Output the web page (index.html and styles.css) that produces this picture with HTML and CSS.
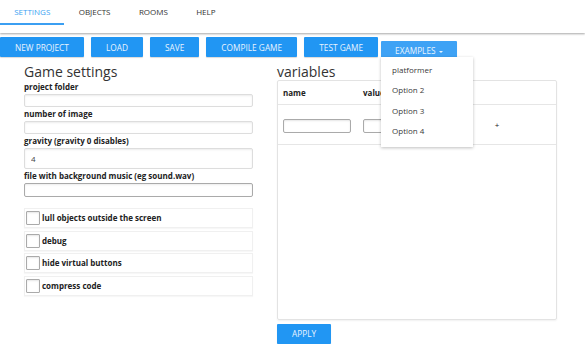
FILE: index.html
```html
<!DOCTYPE html>
<html lang="en">
<head>
    <meta charset="UTF-8">
    <meta name="viewport" content="width=device-width, initial-scale=1.0">
    <title>Game maker</title>
    <link rel="stylesheet" href="styles.css">
</head>
<body>
    <nav class="tabs">
        <a class="tab active">SETTINGS</a>
        <a class="tab">OBJECTS</a>
        <a class="tab">ROOMS</a>
        <a class="tab">HELP</a>
    </nav>

    <div class="toolbar">
        <button class="btn">NEW PROJECT</button>
        <button class="btn">LOAD</button>
        <button class="btn">SAVE</button>
        <button class="btn">COMPILE GAME</button>
        <button class="btn">TEST GAME</button>
        <div class="dropdown">
            <button class="btn open">EXAMPLES <span class="caret"></span></button>
            <ul class="menu">
                <li>platformer</li>
                <li>Option 2</li>
                <li>Option 3</li>
                <li>Option 4</li>
            </ul>
        </div>
    </div>

    <div class="content">
        <section class="settings">
            <h2>Game settings</h2>
            <label for="folder">project folder</label>
            <input type="text" id="folder" class="field">
            <label for="images">number of image</label>
            <input type="text" id="images" class="field">
            <label for="gravity">gravity (gravity 0 disables)</label>
            <input type="text" id="gravity" class="field tall" value="4">
            <label for="music">file with background music (eg sound.wav)</label>
            <input type="text" id="music" class="field dark">

            <div class="checks">
                <label class="check"><span class="box"></span>lull objects outside the screen</label>
                <label class="check"><span class="box"></span>debug</label>
                <label class="check"><span class="box"></span>hide virtual buttons</label>
                <label class="check"><span class="box"></span>compress code</label>
            </div>
        </section>

        <section class="vars">
            <h2>variables</h2>
            <div class="panel">
                <table>
                    <tr>
                        <th class="col-name">name</th>
                        <th class="col-value">value</th>
                        <th></th>
                    </tr>
                    <tr class="entry">
                        <td><input type="text" class="cell-input"></td>
                        <td><input type="text" class="cell-input"></td>
                        <td class="add">+</td>
                    </tr>
                </table>
            </div>
            <button class="btn apply">APPLY</button>
        </section>
    </div>
</body>
</html>
```

FILE: styles.css
```css
body {
    margin: 0;
    font-family: "Open Sans", Arial, sans-serif;
    background-color: #ffffff;
    color: #333333;
}

.tabs {
    display: flex;
    height: 33px;
    box-shadow: 0 1px 2px rgba(0, 0, 0, 0.35);
}

.tab {
    padding: 0 14.2px;
    height: 23px;
    line-height: 23px;
    font-size: 8px;
    color: #333333;
    border-bottom: 2px solid transparent;
}

.tab.active {
    color: #3b9ff2;
    border-bottom-color: #3b9ff2;
}

.toolbar {
    display: flex;
    margin-top: 4px;
    height: 20px;
}

.btn {
    height: 20px;
    padding: 0 15px;
    margin-right: 7px;
    border: none;
    border-radius: 1px;
    background-color: #2196f3;
    color: #e8f3fe;
    font-family: "Open Sans", Arial, sans-serif;
    font-size: 8.3px;
    cursor: pointer;
    box-shadow: 0 1px 1px rgba(0, 0, 0, 0.15);
}

.btn.open {
    background-color: #3ea2f5;
    margin-right: 0;
    padding: 0 14px;
}

.caret {
    display: inline-block;
    width: 0;
    height: 0;
    margin-left: 1px;
    vertical-align: 1px;
    border-left: 2px solid transparent;
    border-right: 2px solid transparent;
    border-top: 2px solid #e8f3fe;
}

.dropdown {
    position: relative;
    margin-left: -4px;
}

.menu {
    position: absolute;
    top: 100%;
    left: 0;
    width: 92px;
    margin: 0;
    padding: 3px 0 6px;
    list-style: none;
    background-color: #ffffff;
    box-shadow: 0 1px 3px rgba(0, 0, 0, 0.25);
    z-index: 5;
}

.menu li {
    height: 20.3px;
    line-height: 20.3px;
    padding-left: 11px;
    font-size: 8px;
    color: #3a3a3a;
}

.content {
    display: grid;
    grid-template-columns: 229px 280px;
    column-gap: 24px;
    padding-left: 24px;
}

h2 {
    margin: 7px 0 0;
    font-size: 14px;
    line-height: 16px;
    font-weight: 400;
    color: #333333;
}

.settings label {
    display: block;
    font-size: 8px;
    font-weight: 700;
    line-height: 14px;
    color: #222222;
}

.field {
    display: block;
    box-sizing: border-box;
    width: 100%;
    height: 13px;
    margin: 0;
    padding: 0 6px;
    border: 1px solid #dddddd;
    border-radius: 2px;
    box-shadow: inset 0 1px 2px rgba(0, 0, 0, 0.08);
    font-family: "Open Sans", Arial, sans-serif;
    font-size: 8px;
    color: #444444;
}

.field.tall {
    height: 21px;
}

.field.dark {
    height: 14px;
    border-color: #aaaaaa;
}

.checks {
    display: flex;
    flex-direction: column;
    gap: 2.5px;
    margin-top: 11px;
}

.settings .check {
    display: flex;
    align-items: center;
    height: 20px;
    box-sizing: border-box;
    border: 1px solid #f0f0f0;
    box-shadow: 0 1px 1px rgba(0, 0, 0, 0.03);
    padding-left: 1px;
    line-height: 14px;
}

.box {
    width: 14px;
    height: 14px;
    box-sizing: border-box;
    margin-right: 2px;
    border: 1px solid #aaaaaa;
    border-radius: 1px;
    box-shadow: inset 0 1px 2px rgba(0, 0, 0, 0.1);
}

.panel {
    box-sizing: border-box;
    height: 240px;
    border: 1px solid #e3e3e3;
    border-radius: 2px;
    box-shadow: 0 1px 2px rgba(0, 0, 0, 0.06);
}

table {
    width: 100%;
    border-collapse: collapse;
}

th {
    height: 23px;
    padding: 0 5px;
    text-align: left;
    font-size: 8px;
    font-weight: 700;
    color: #222222;
    border-bottom: 1px solid #e6e6e6;
}

.col-name,
.col-value {
    width: 70px;
}

.entry td {
    height: 39px;
    padding: 0 5px;
    border-bottom: 1px solid #e6e6e6;
}

.cell-input {
    box-sizing: border-box;
    width: 68px;
    height: 14px;
    margin: 0;
    border: 1px solid #aaaaaa;
    border-radius: 2px;
    box-shadow: inset 0 1px 2px rgba(0, 0, 0, 0.1);
}

.add {
    text-align: center;
    font-size: 8px;
    color: #222222;
}

.apply {
    margin-top: 3px;
}
```
